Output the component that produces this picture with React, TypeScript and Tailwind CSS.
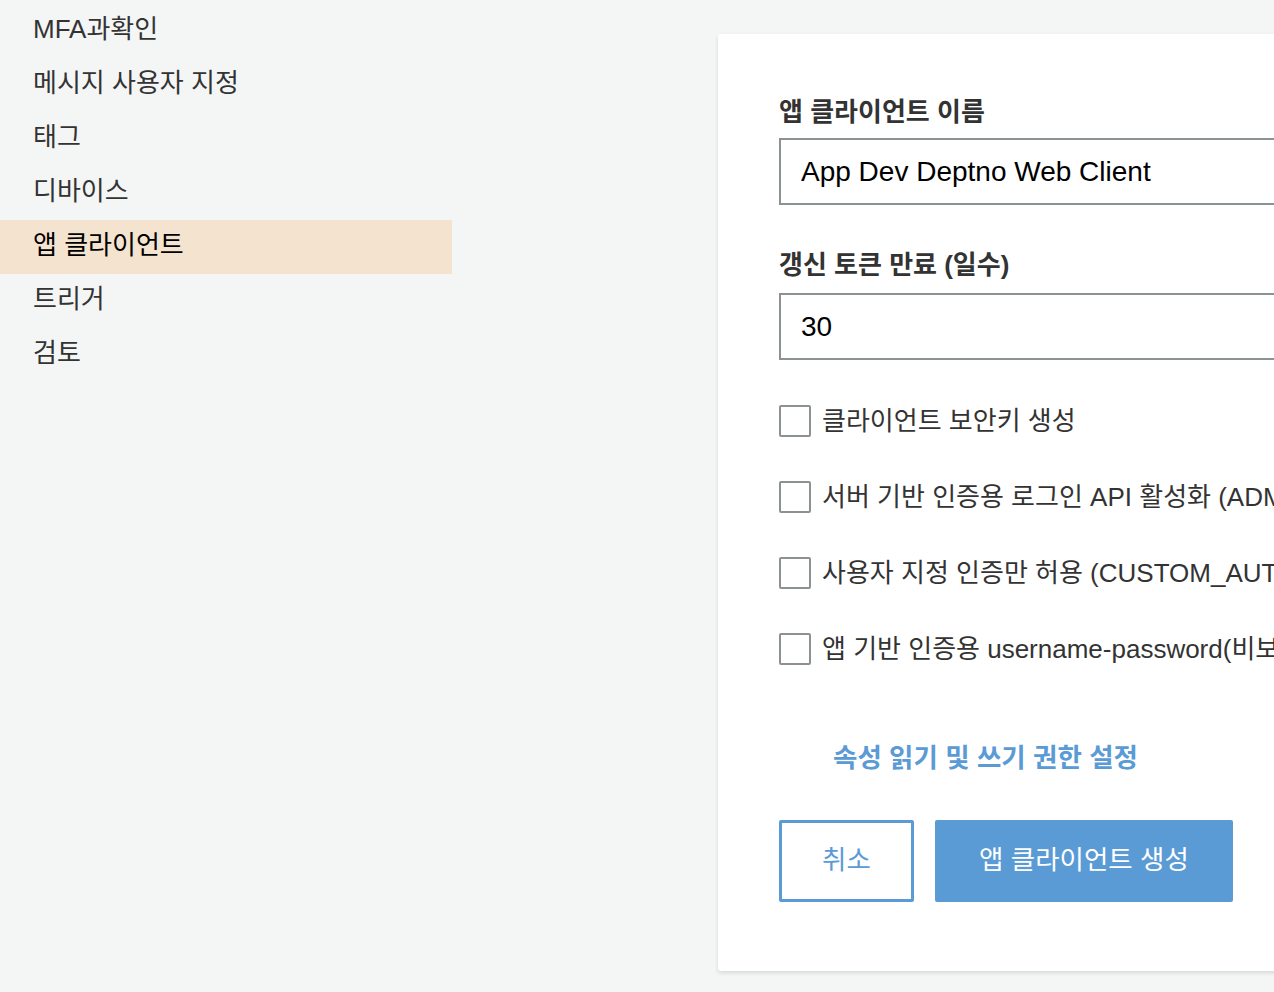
import React, { useState } from 'react';

const navItems = ['MFA과확인', '메시지 사용자 지정', '태그', '디바이스', '앱 클라이언트', '트리거', '검토'];

const options = [
  '클라이언트 보안키 생성',
  '서버 기반 인증용 로그인 API 활성화 (ADMIN_NO_SRP_AUTH)',
  '사용자 지정 인증만 허용 (CUSTOM_AUTH_FLOW_ONLY)',
  '앱 기반 인증용 username-password(비보안) 플로 활성화 (USER_PASSWORD_AUTH)',
];

function App() {
  const [name, setName] = useState('App Dev Deptno Web Client');
  const [days, setDays] = useState('30');
  const [checked, setChecked] = useState<boolean[]>([false, false, false, false]);

  return (
    <div
      className="h-[992px] w-[1274px] overflow-hidden bg-[#f4f6f6] flex"
      style={{ fontFamily: '"Liberation Sans", "Noto Sans CJK KR", sans-serif' }}
    >
      {/* Sidebar */}
      <nav className="w-[452px] shrink-0 pt-[4px]">
        {navItems.map((item) => {
          const active = item === '앱 클라이언트';
          return (
            <div
              key={item}
              className={
                'h-[54px] flex items-center pl-[33px] pb-[3px] text-[26px] ' +
                (active ? 'bg-[#f4e4cf] text-black' : 'text-[#333]')
              }
            >
              {item}
            </div>
          );
        })}
      </nav>

      {/* Form card */}
      <div className="ml-[266px] mt-[34px] h-[937px] w-[760px] shrink-0 bg-white rounded-[3px] shadow-[0_2px_4px_rgba(0,0,0,0.12)] pl-[61px] pt-[64px]">
        <div className="text-[26px] font-bold text-[#333] leading-[28px]">앱 클라이언트 이름</div>
        <input
          value={name}
          onChange={(e) => setName(e.target.value)}
          spellCheck={false}
          className="mt-[12px] h-[67px] w-full border-2 border-[#8c9194] px-[20px] text-[28px] text-black outline-none"
        />

        <div className="mt-[46px] text-[26px] font-bold text-[#333] leading-[28px]">갱신 토큰 만료 (일수)</div>
        <input
          value={days}
          onChange={(e) => setDays(e.target.value)}
          className="mt-[14px] h-[67px] w-full border-2 border-[#8c9194] px-[20px] text-[28px] text-black outline-none"
        />

        <div className="mt-[45px] flex flex-col gap-[44px]">
          {options.map((opt, i) => (
            <label key={opt} className="flex items-center h-[32px] gap-[11px] whitespace-nowrap cursor-pointer">
              <span
                className="h-[32px] w-[32px] shrink-0 border-2 border-[#8c9194] bg-white rounded-[2px] flex items-center justify-center"
                onClick={() => setChecked(checked.map((c, j) => (j === i ? !c : c)))}
              >
                {checked[i] && <span className="h-[16px] w-[16px] bg-[#5b9bd5]" />}
              </span>
              <span className="text-[26px] text-[#333]">{opt}</span>
            </label>
          ))}
        </div>

        <div className="mt-[78px] pl-[54px] text-[26.5px] font-bold text-[#5b9bd5] leading-[30px]">
          속성 읽기 및 쓰기 권한 설정
        </div>

        <div className="mt-[47px] flex gap-[21px]">
          <button className="h-[82px] w-[135px] border-[3px] border-[#5b9bd5] rounded-[2px] text-[26.5px] text-[#5b9bd5] bg-white">
            취소
          </button>
          <button className="h-[82px] w-[298px] bg-[#5b9bd5] rounded-[2px] text-[26.5px] text-white">
            앱 클라이언트 생성
          </button>
        </div>
      </div>
    </div>
  );
}

export default App;
